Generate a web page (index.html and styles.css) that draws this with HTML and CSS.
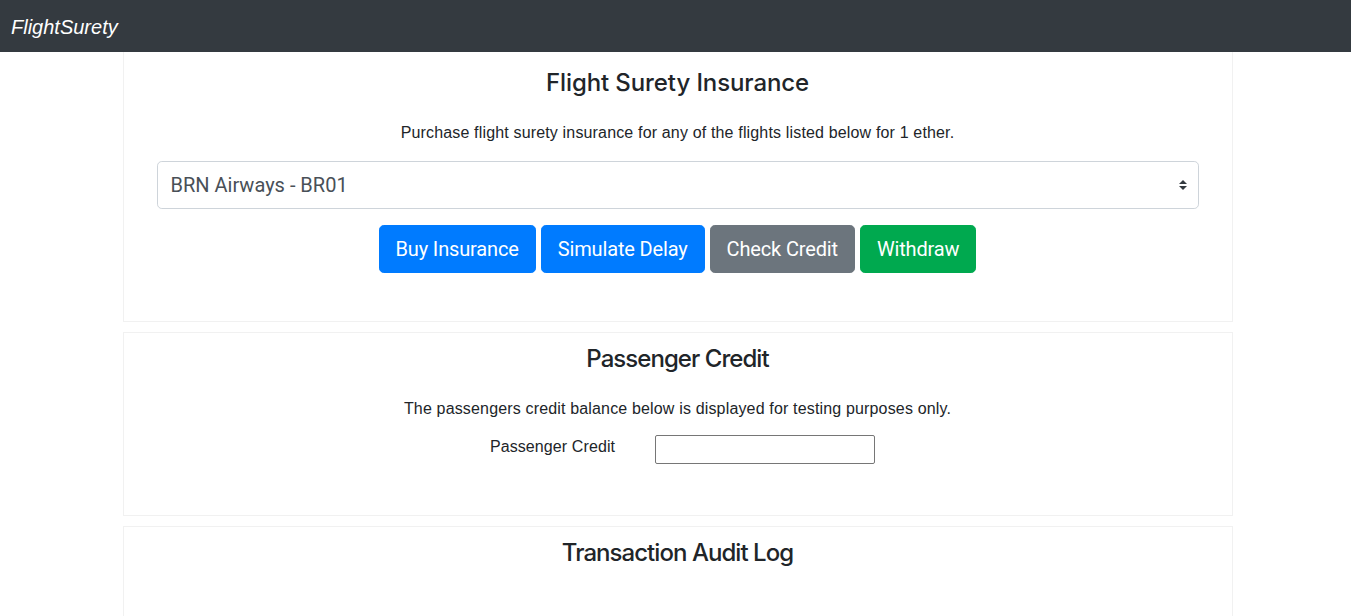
FILE: index.html
```html
<!DOCTYPE html>
<html lang="en">
<head>
<meta charset="utf-8">
<title>FlightSurety</title>
<link rel="stylesheet" href="styles.css">
</head>
<body>
<nav class="navbar">
  <span class="brand">FlightSurety</span>
</nav>
<main class="page">
  <div class="container">
    <section class="panel panel-first">
      <h2 class="panel-title">Flight Surety Insurance</h2>
      <p class="panel-text">Purchase flight surety insurance for any of the flights listed below for 1 ether.</p>
      <div class="select-wrap">
        <select class="flight-select">
          <option>BRN Airways - BR01</option>
        </select>
        <svg class="select-arrow" viewBox="0 0 4 5" width="8" height="10"><path fill="#343a40" d="M2 0L0 2h4zm0 5L0 3h4z"/></svg>
      </div>
      <div class="btn-row">
        <button class="btn btn-primary">Buy Insurance</button>
        <button class="btn btn-primary">Simulate Delay</button>
        <button class="btn btn-secondary">Check Credit</button>
        <button class="btn btn-success">Withdraw</button>
      </div>
    </section>
    <section class="panel panel-credit">
      <h2 class="panel-title title-narrow">Passenger Credit</h2>
      <p class="panel-text text-tight">The passengers credit balance below is displayed for testing purposes only.</p>
      <div class="credit-row">
        <label class="credit-label" for="credit">Passenger Credit</label>
        <input class="credit-input" id="credit" type="text">
      </div>
    </section>
    <section class="panel panel-log">
      <h2 class="panel-title title-narrow">Transaction Audit Log</h2>
    </section>
  </div>
</main>
</body>
</html>
```
FILE: styles.css
```css
html, body {
  margin: 0;
  padding: 0;
  background: #fff;
}
body {
  font-family: "Liberation Sans", Arial, sans-serif;
  color: #212529;
  font-size: 16px;
  line-height: 24px;
  overflow: hidden;
}
.navbar {
  height: 52px;
  background: #343a40;
  display: flex;
  align-items: center;
  padding-left: 11px;
}
.brand {
  color: #fff;
  font-style: italic;
  font-size: 20px;
  line-height: 30px;
  margin-top: 1px;
}
.page {
  padding-left: 4px;
}
.container {
  width: 1110px;
  margin: 0 auto;
}
.panel {
  border: 1px solid #f1f1f1;
  margin-bottom: 10px;
  padding: 11px 33px 0;
  text-align: center;
}
.panel-first {
  border-top: none;
  padding-top: 16px;
  padding-bottom: 48px;
}
.panel-credit {
  padding-bottom: 51px;
}
.panel-log {
  min-height: 200px;
}
.panel-title {
  margin: 0 0 24px;
  font-family: Inter, "Liberation Sans", sans-serif;
  font-size: 24px;
  line-height: 29px;
  font-weight: 500;
  letter-spacing: -0.1px;
}
.title-narrow {
  letter-spacing: -0.95px;
}
.panel-text {
  margin: 0 0 16px;
  letter-spacing: 0.16px;
}
.text-tight {
  margin-bottom: 14px;
}
.select-wrap {
  position: relative;
  margin-bottom: 16px;
}
.flight-select {
  display: block;
  width: 100%;
  height: 48px;
  box-sizing: border-box;
  border: 1px solid #ced4da;
  border-radius: 4.8px;
  background: #fff;
  color: #495057;
  font-family: Roboto, "Liberation Sans", sans-serif;
  font-size: 20px;
  padding: 0 13px;
  appearance: none;
  -webkit-appearance: none;
  outline: none;
}
.select-arrow {
  position: absolute;
  right: 12px;
  top: 19px;
  pointer-events: none;
}
.btn-row {
  display: flex;
  justify-content: center;
  gap: 5px;
}
.btn {
  font-family: Roboto, "Liberation Sans", sans-serif;
  font-size: 20px;
  line-height: 30px;
  padding: 8px 16px;
  border: 1px solid transparent;
  border-radius: 4.8px;
  color: #fff;
  letter-spacing: -0.15px;
  cursor: pointer;
}
.btn-primary {
  background: #007bff;
  border-color: #007bff;
}
.btn-secondary {
  background: #6c757d;
  border-color: #6c757d;
}
.btn-success {
  background: #00a94f;
  border-color: #00a94f;
}
.credit-row {
  display: flex;
  justify-content: center;
  align-items: flex-start;
  gap: 40px;
  padding-left: 10px;
}
.credit-label {
  line-height: 24px;
  letter-spacing: 0.1px;
}
.credit-input {
  width: 220px;
  height: 29px;
  box-sizing: border-box;
  border: 1px solid #767676;
  border-radius: 2px;
  padding: 1px 2px;
  font-family: inherit;
  font-size: 14px;
  margin: 0;
}
```
